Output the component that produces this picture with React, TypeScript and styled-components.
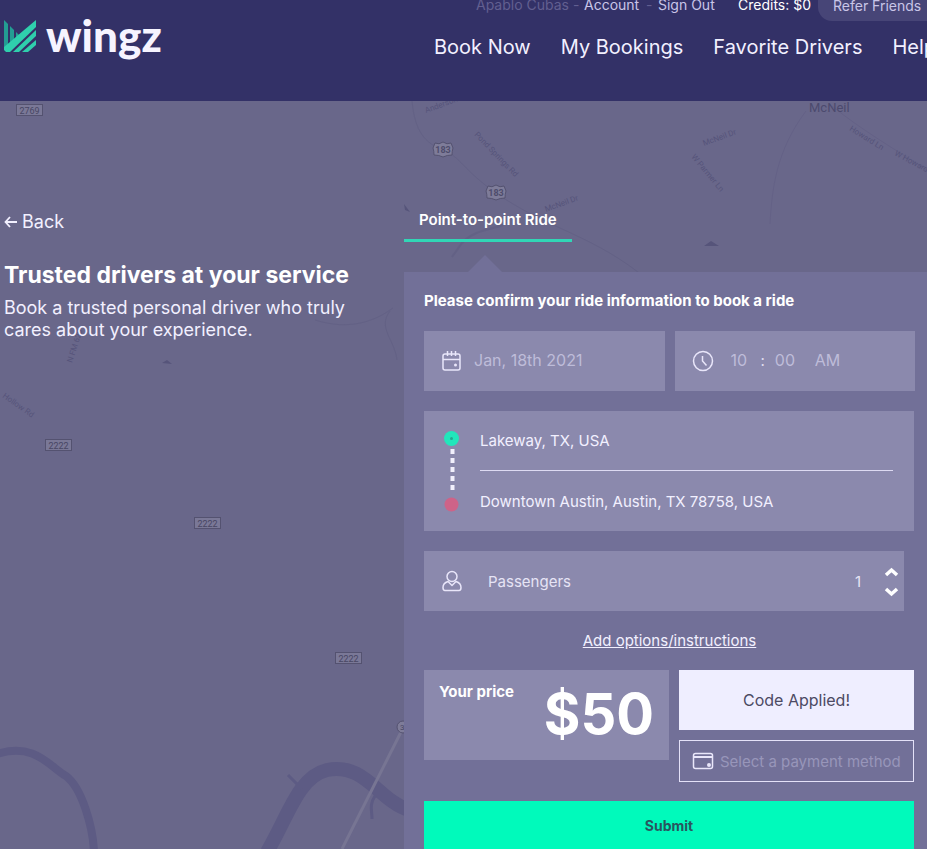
import React, { useState } from "react";
import styled, { createGlobalStyle } from "styled-components";

const GlobalStyle = createGlobalStyle`
  *, *::before, *::after { box-sizing: border-box; }
  body {
    margin: 0;
    background: #69678a;
    color: #f2f0ff;
    font-family: Inter, "Open Sans", sans-serif;
    font-size: 15px;
    overflow-x: hidden;
  }
  a { color: inherit; text-decoration: none; }
  button, input, select { font: inherit; color: inherit; }
`;

const Page = styled.div`
  position: relative;
  min-height: 100vh;
  display: flex;
  flex-direction: column;
  overflow: hidden;
`;

const Header = styled.header`
  display: flex;
  justify-content: space-between;
  height: 101px;
  padding-left: 4px;
  background: #333167;
`;

const Logo = styled.a`
  display: block;
  padding-top: 16px;
  svg { display: block; overflow: visible; }
`;

const WordMark = styled.text`
  font-family: Lato, sans-serif;
  font-weight: 900;
  font-size: 44px;
  fill: #f6f4ff;
`;

const Navigation = styled.div`
  width: 493px;
  flex: none;
  white-space: nowrap;
`;

const AccountBar = styled.div`
  display: flex;
  align-items: flex-start;
  height: 21px;
  padding-left: 42px;
  font-size: 14px;
  line-height: 10px;
  color: #c9c5e8;
  > * { flex: none; }
`;

const UserName = styled.span`
  width: 108px;
  color: #625f90;
`;
const AccountLink = styled.a<{ $width: number }>`
  width: ${(p) => p.$width}px;
`;
const Dash = styled.span`
  width: 12px;
  color: #625f90;
`;
const Credits = styled.span`
  width: 80px;
  color: #ffffff;
`;
const ReferLink = styled.a`
  height: 21px;
  padding: 0 24px 0 15px;
  border-radius: 0 0 14px 14px;
  background: #474577;
  line-height: 12px;
`;

const MainNav = styled.nav`
  display: flex;
  gap: 30px;
  padding-top: 14px;
  font-size: 20px;
  line-height: 24px;
`;

const Body = styled.main`
  position: relative;
  flex: 1;
  display: grid;
  grid-template-columns: 404px minmax(0, 1fr);
`;

const MapBackdrop = styled.svg`
  position: absolute;
  top: 0;
  left: 0;
  font-family: Roboto, sans-serif;
`;

const Intro = styled.section`
  position: relative;
  padding: 110px 40px 0 4px;
  font-size: 18px;
  line-height: 22px;
`;

const BackLink = styled.a`
  display: flex;
  align-items: center;
  gap: 4px;
`;

const Title = styled.h1`
  margin: 28px 0 8px;
  font-size: 23px;
  line-height: 28px;
  font-weight: 700;
  white-space: nowrap;
  color: #ffffff;
`;

const Tagline = styled.p`
  margin: 0;
`;

const Booking = styled.section`
  position: relative;
  display: flex;
  flex-direction: column;
  align-items: stretch;
  padding-top: 102px;
`;

const Tab = styled.button`
  align-self: flex-start;
  height: 39px;
  padding: 0 15px 4px;
  border: 0;
  border-bottom: 3px solid #31d6b6;
  background: none;
  font-size: 15px;
  font-weight: 600;
  color: #ffffff;
`;

const Pointer = styled.svg`
  display: block;
  margin: 13px 0 0 64px;
`;

const Panel = styled.form`
  flex: 1;
  display: flex;
  flex-direction: column;
  padding: 18px 12px 0 20px;
  background: #727098;
`;

const PanelTitle = styled.h2`
  margin: 0 0 19px;
  font-size: 15px;
  line-height: 22px;
  font-weight: 700;
  color: #ffffff;
`;

const Row = styled.div`
  display: flex;
  gap: 10px;
`;

const Field = styled.div`
  flex: 1 1 0;
  min-width: 0;
  height: 60px;
  display: flex;
  align-items: center;
  padding: 0 17px;
  background: #8b89ad;
  color: #bebcd9;
  svg { flex: none; }
`;

const PlainInput = styled.input<{ $width: number }>`
  width: ${(p) => p.$width}px;
  height: 30px;
  padding: 0 0 2px;
  border: 0;
  background: none;
  font-size: 16px;
`;

const DateInput = styled(PlainInput)`
  margin-left: 12px;
`;

const TimeInputs = styled.div`
  display: flex;
  align-items: center;
  gap: 10px;
  margin-left: 17px;
`;

const Colon = styled.span`
  padding-bottom: 2px;
  color: #e0deef;
`;

const Trip = styled.div`
  display: grid;
  grid-template-columns: 56px minmax(0, 1fr);
  height: 120px;
  margin: 20px 1px 20px 0;
  padding-right: 21px;
  background: #8b89ad;
`;

const Stops = styled.div`
  display: grid;
  grid-template-rows: 60px 60px;
`;

const StopInput = styled.input`
  width: 100%;
  padding: 0;
  border: 0;
  background: none;
  font-size: 15px;
  &:first-child { border-bottom: 1px solid #dddaf2; }
`;

const PassengerField = styled(Field)`
  flex: none;
  margin-right: 11px;
  padding-right: 5px;
  color: #e6e4f5;
`;

const PassengerLabel = styled.label`
  flex: 1;
  margin-left: 25px;
`;

const Count = styled.input`
  width: 20px;
  padding: 0;
  border: 0;
  background: none;
  text-align: center;
`;

const Stepper = styled.div`
  display: flex;
  flex-direction: column;
  margin-left: 16px;
`;

const StepButton = styled.button`
  height: 20px;
  padding: 0;
  border: 0;
  background: none;
  svg { display: block; }
`;

const OptionsLink = styled.a`
  align-self: center;
  margin: 19px 0 18px;
  line-height: 22px;
  text-decoration: underline;
`;

const PaymentRow = styled.div`
  display: grid;
  grid-template-columns: minmax(0, 245fr) minmax(0, 235fr);
  gap: 10px;
  align-items: start;
  margin-right: 1px;
`;

const Price = styled.div`
  height: 90px;
  display: flex;
  justify-content: space-between;
  padding: 0 15px;
  background: #8b89ad;
  font-weight: 700;
  color: #ffffff;
`;

const PriceLabel = styled.span`
  padding-top: 12px;
  line-height: 20px;
`;

const Amount = styled.strong`
  font-size: 56px;
  line-height: 88px;
  font-weight: 700;
`;

const PaymentColumn = styled.div`
  display: flex;
  flex-direction: column;
  gap: 10px;
`;

const CodeButton = styled.button`
  height: 60px;
  border: 0;
  background: #efeeff;
  color: #4c4a63;
  font-size: 16px;
`;

const PaymentButton = styled.button`
  display: flex;
  align-items: center;
  gap: 6px;
  height: 42px;
  padding: 0 0 0 12px;
  border: 1px solid #e4e1f8;
  background: none;
  color: #9896ba;
  white-space: nowrap;
  svg { flex: none; }
`;

const SubmitButton = styled.button`
  height: 48px;
  margin: 19px 1px 0 0;
  border: 0;
  background: #00fabb;
  color: #29565f;
  font-size: 14px;
  font-weight: 700;
`;

const boxShields = [
  { x: 16, y: 3, label: "2769" },
  { x: 45, y: 338, label: "2222" },
  { x: 194, y: 416, label: "2222" },
  { x: 335, y: 551, label: "2222" },
];

const roadNames = [
  { x: 426, y: 12, angle: -20, label: "Anderson Mill" },
  { x: 474, y: 34, angle: 46, label: "Pond Springs Rd" },
  { x: 704, y: 45, angle: -20, label: "McNeil Dr" },
  { x: 691, y: 56, angle: 50, label: "W Parmer Ln" },
  { x: 546, y: 111, angle: -20, label: "McNeil Dr" },
  { x: 849, y: 29, angle: 32, label: "Howard Ln" },
  { x: 894, y: 54, angle: 28, label: "W Howard Ln" },
  { x: 72, y: 262, angle: -72, label: "N FM 620" },
  { x: 2, y: 296, angle: 35, label: "Hollow Rd" },
];

function MapArt() {
  return (
    <MapBackdrop width="100%" height="748" aria-hidden="true">
      <g fill="none" stroke="#605e83" opacity="0.6">
        <path d="M412 0c3 31 13 42 31 49s20 20 53 43c53 37 99 42 153 88" />
        <path d="M806 10c-30 40-34 78-36 113M832 5c31 25 61 42 95 64M315 219c35 11 60 1 78-12M390 210c-13 17 5 29 7 49" />
        <path strokeWidth="2" d="M452 58l10-14c12-13 28-13 41-18" transform="translate(0 98)" />
      </g>
      <g fill="none" stroke="#5d5b84">
        <path strokeWidth="8" d="M-3 653c38-12 53 13 69 22 16 12 27 51 28 76" />
        <path strokeWidth="14" d="M267 751c21-35 31-75 60-82 38-8 52 31 82 40" />
        <path strokeWidth="3" d="m288 674 14 14M375 695c-6 9-3 14-3 23" />
      </g>
      <path d="m342 748 60-119" stroke="#777593" strokeWidth="3" />
      <g fontSize="8" fill="#56547a">
        {roadNames.map((r) => (
          <text key={r.label + r.x} transform={`translate(${r.x} ${r.y}) rotate(${r.angle})`}>{r.label}</text>
        ))}
      </g>
      <text x="809" y="11" fontSize="13" fill="#4c4a6e">McNeil</text>
      <path d="m704 145 7-5 8 5zM404 103l6 8-5-2zM162 262l5-3 5 4z" fill="#56547a" />
      {boxShields.map((s) => (
        <g key={s.x}>
          <rect x={s.x + 0.5} y={s.y + 0.5} width="26" height="11" fill="#7a7897" stroke="#545270" />
          <text x={s.x + 13.5} y={s.y + 9.5} fontSize="9" textAnchor="middle" fill="#484664">{s.label}</text>
        </g>
      ))}
      {[{ x: 433, y: 41 }, { x: 486, y: 84 }].map((s) => (
        <g key={s.x} transform={`translate(${s.x} ${s.y})`}>
          <path d="M2 1q4 2 8-1 4 3 8 1l2 5q-1 3-1 7-5 0-9 2-4-2-9-2 0-4-1-7z" fill="#7e7c99" stroke="#545270" />
          <text x="10" y="11" fontSize="9" fontWeight="700" textAnchor="middle" fill="#4e4c6c">183</text>
        </g>
      ))}
      <circle cx="403" cy="626" r="6" fill="#7e7c99" stroke="#545270" />
      <text x="400" y="629" fontSize="8" fill="#484664">3</text>
    </MapBackdrop>
  );
}

function WingzLogo() {
  return (
    <svg width="170" height="60" viewBox="0 0 170 60" role="img" aria-label="wingz">
      <g fill="#239d93">
        <path d="M0 4l4 4v22l-4 4z" />
        <path d="M6 10l4 4v11l-4 4z" />
        <path d="M12 16l4 4-4 4z" />
      </g>
      <g fill="#2fcfad">
        <path d="M32 4v7L6 36H2l-2-2v-3z" />
        <path d="M32 14v6L15 36H9z" />
        <path d="M32 24v5l-8 7h-6z" />
      </g>
      <WordMark x="42" y="36">wingz</WordMark>
    </svg>
  );
}

const line = { fill: "none", stroke: "#e9e6fa", strokeWidth: 1.5 } as const;

function CalendarIcon() {
  return (
    <svg width="21" height="20" viewBox="0 0 21 20" {...line}>
      <rect x="2" y="3" width="17" height="16" rx="2" />
      <path d="M2 8.500h17M6.500 0v5M10.500 0v5M14.500 0v5" />
      <circle cx="14.500" cy="14" r="1.500" fill="#e9e6fa" stroke="none" />
    </svg>
  );
}
function ClockIcon() {
  return (
    <svg width="22" height="22" viewBox="0 0 22 22" {...line}>
      <circle cx="11" cy="11" r="9.500" />
      <path d="M10.500 6v5l4 4.500" />
    </svg>
  );
}
function PersonIcon() {
  return (
    <svg width="22" height="22" viewBox="0 0 22 22" {...line}>
      <circle cx="11" cy="6.500" r="5" />
      <path d="M7 11.500c-3 1-5 3-5 6 0 2 1 3 2 3h14c1 0 2-1 2-3 0-3-2-5-5-6l-4 4z" strokeLinejoin="round" />
    </svg>
  );
}
function WalletIcon() {
  return (
    <svg width="22" height="18" viewBox="0 0 22 18" {...line}>
      <rect x="1.500" y="1.500" width="19" height="15" rx="2" />
      <path d="M1.500 5h19" strokeWidth="2" />
      <circle cx="17" cy="13" r="2" fill="#e9e6fa" stroke="none" />
    </svg>
  );
}
function RouteMarks() {
  return (
    <svg width="56" height="120" viewBox="0 0 56 120" aria-hidden="true">
      <circle cx="27.500" cy="27.500" r="7.500" fill="#21e6bb" />
      <circle cx="27.500" cy="27.500" r="1.500" fill="#24a98f" />
      <path d="M28.500 38v42" stroke="#f1effc" strokeWidth="4" strokeDasharray="5 4" />
      <circle cx="27.500" cy="93.500" r="7" fill="#ce6388" />
    </svg>
  );
}
function Chevron({ down = false }: { down?: boolean }) {
  return (
    <svg width="15" height="20" viewBox="0 0 15 20" fill="none" stroke="#fff" strokeWidth="3.5">
      <path d={down ? "m2 8 5.500 5L13 8" : "m2 14 5.500-5 5.500 5"} />
    </svg>
  );
}

export default function App() {
  const [passengers, setPassengers] = useState(1);
  return (
    <>
      <GlobalStyle />
      <Page>
        <Header>
          <Logo href="#"><WingzLogo /></Logo>
          <Navigation>
            <AccountBar>
              <UserName>Apablo Cubas -</UserName>
              <AccountLink href="#" $width={62}>Account</AccountLink>
              <Dash>-</Dash>
              <AccountLink href="#" $width={80}>Sign Out</AccountLink>
              <Credits>Credits: $0</Credits>
              <ReferLink href="#">Refer Friends</ReferLink>
            </AccountBar>
            <MainNav>
              <a href="#">Book Now</a>
              <a href="#">My Bookings</a>
              <a href="#">Favorite Drivers</a>
              <a href="#">Help</a>
            </MainNav>
          </Navigation>
        </Header>
        <Body>
          <MapArt />
          <Intro>
            <BackLink href="#">
              <svg width="14" height="12" viewBox="0 0 14 12" fill="none" stroke="#f2f0ff" strokeWidth="1.8">
                <path d="M13 6H1.500M6 1 1.500 6 6 11" />
              </svg>
              Back
            </BackLink>
            <Title>Trusted drivers at your service</Title>
            <Tagline>Book a trusted personal driver who truly cares about your experience.</Tagline>
          </Intro>
          <Booking>
            <Tab type="button">Point-to-point Ride</Tab>
            <Pointer width="34" height="17" viewBox="0 0 34 17"><path d="M0 17 17 0l17 17z" fill="#727098" /></Pointer>
            <Panel onSubmit={(e) => e.preventDefault()}>
              <PanelTitle>Please confirm your ride information to book a ride</PanelTitle>
              <Row>
                <Field>
                  <CalendarIcon />
                  <DateInput $width={150} aria-label="Date" defaultValue="Jan, 18th 2021" />
                </Field>
                <Field>
                  <ClockIcon />
                  <TimeInputs>
                    <PlainInput $width={20} aria-label="Hour" defaultValue="10" />
                    <Colon>:</Colon>
                    <PlainInput $width={30} aria-label="Minutes" defaultValue="00" />
                    <PlainInput $width={30} aria-label="AM or PM" defaultValue="AM" />
                  </TimeInputs>
                </Field>
              </Row>
              <Trip>
                <RouteMarks />
                <Stops>
                  <StopInput aria-label="Pick-up" defaultValue="Lakeway, TX, USA" />
                  <StopInput aria-label="Drop-off" defaultValue="Downtown Austin, Austin, TX 78758, USA" />
                </Stops>
              </Trip>
              <PassengerField>
                <PersonIcon />
                <PassengerLabel htmlFor="passengers">Passengers</PassengerLabel>
                <Count id="passengers" value={passengers} readOnly />
                <Stepper>
                  <StepButton type="button" aria-label="More passengers" onClick={() => setPassengers(passengers + 1)}><Chevron /></StepButton>
                  <StepButton type="button" aria-label="Fewer passengers" onClick={() => setPassengers(Math.max(1, passengers - 1))}><Chevron down /></StepButton>
                </Stepper>
              </PassengerField>
              <OptionsLink href="#">Add options/instructions</OptionsLink>
              <PaymentRow>
                <Price>
                  <PriceLabel>Your price</PriceLabel>
                  <Amount>$50</Amount>
                </Price>
                <PaymentColumn>
                  <CodeButton type="button">Code Applied!</CodeButton>
                  <PaymentButton type="button"><WalletIcon />Select a payment method</PaymentButton>
                </PaymentColumn>
              </PaymentRow>
              <SubmitButton type="submit">Submit</SubmitButton>
            </Panel>
          </Booking>
        </Body>
      </Page>
    </>
  );
}
